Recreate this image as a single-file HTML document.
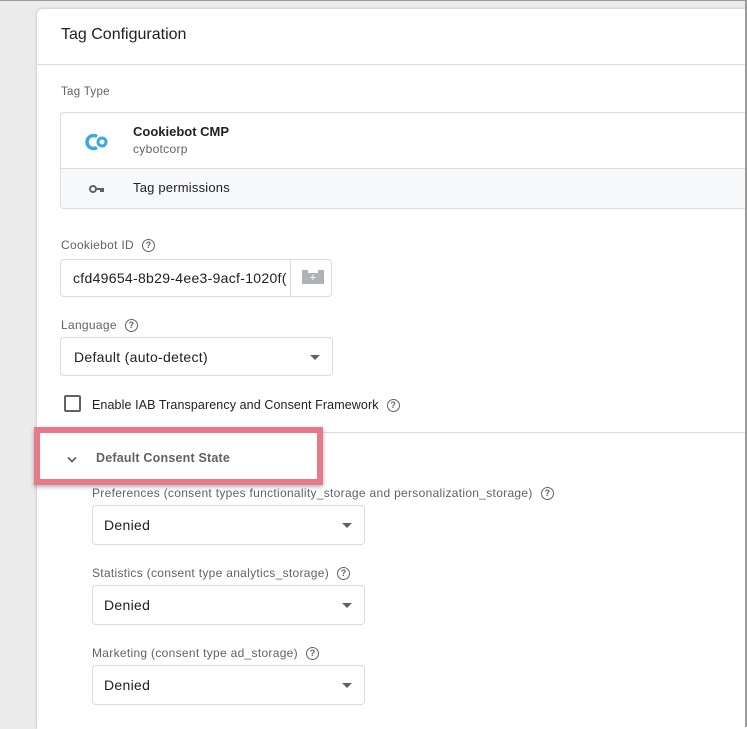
<!DOCTYPE html>
<html><head><style>
*{box-sizing:border-box;margin:0;padding:0}
body{width:747px;height:727px;overflow:hidden;background:#ebebeb;font-family:"Liberation Sans",Arial,sans-serif;position:relative;color:#202124}
.frame{position:absolute;left:0;top:0;width:747px;height:727px;border-top:1px solid #9a9a9a;border-right:2px solid #9a9a9a}
.card{position:absolute;left:37px;top:9px;width:710px;height:720px;background:#fff;border-radius:6px 0 0 0;box-shadow:0 0 3px rgba(0,0,0,.2)}
.abs{position:absolute}
.lbl{font-size:12px;color:#5f6368;letter-spacing:.3px}
.q{display:inline-block;width:13px;height:13px;border:1.3px solid #5f6368;border-radius:50%;font-size:9px;line-height:11px;text-align:center;color:#5f6368;font-weight:bold;vertical-align:middle;margin-left:8px;letter-spacing:0}
.sel{position:absolute;border:1px solid #dadce0;border-radius:4px;background:#fff;font-size:14px;padding-left:11px;line-height:38px;letter-spacing:.3px}
.sel:after{content:"";position:absolute;right:12px;top:17px;border-left:5px solid transparent;border-right:5px solid transparent;border-top:5px solid #5f6368}
</style></head><body>
<div class="card">
 <div class="abs" style="left:24px;top:17px;font-size:16px">Tag Configuration</div>
 <div class="abs" style="left:0;top:55px;width:710px;height:1px;background:#dadce0"></div>
 <div class="abs lbl" style="left:24px;top:77px;font-size:11.5px">Tag Type</div>
 <div class="abs" style="left:23px;top:103px;width:700px;height:97px;border:1px solid #dadce0;border-radius:4px;overflow:hidden">
  <div class="abs" style="left:0;top:55px;width:700px;height:42px;background:#f8f9fa;border-top:1px solid #dadce0"></div>
  <svg class="abs" style="left:23px;top:19px" width="28" height="20" viewBox="0 0 28 20"><path d="M13 4.5A6.5 6.5 0 1 0 13 15.5" fill="none" stroke="#3ba9e0" stroke-width="3.5"/><circle cx="18" cy="10" r="4" fill="none" stroke="#3ba9e0" stroke-width="3"/></svg>
  <div class="abs" style="left:72px;top:11px;font-size:13px;font-weight:bold">Cookiebot CMP</div>
  <div class="abs lbl" style="left:72px;top:29px;font-size:12px">cybotcorp</div>
  <svg class="abs" style="left:28px;top:71px" width="16" height="10"><circle cx="4" cy="5" r="3" fill="none" stroke="#5f6368" stroke-width="2"/><path d="M7 5h8M12 5v3M14 5v3" stroke="#5f6368" stroke-width="2"/></svg>
  <div class="abs" style="left:72px;top:67px;font-size:13px;letter-spacing:.2px">Tag permissions</div>
 </div>
 <div class="abs lbl" style="left:24px;top:229px">Cookiebot ID<span class="q">?</span></div>
 <div class="abs" style="left:23px;top:250px;width:272px;height:38px;border:1px solid #dadce0;border-radius:4px">
  <div class="abs" style="left:12px;top:10px;font-size:14px;letter-spacing:.3px;width:216px;overflow:hidden;white-space:nowrap">cfd49654-8b29-4ee3-9acf-1020f(</div>
  <div class="abs" style="left:229px;top:0;width:1px;height:36px;background:#dadce0"></div>
  <div class="abs" style="left:241px;top:13px;width:22px;height:11px;background:#b0b3b6;color:#fff;font-size:11px;line-height:11px;text-align:center">+</div>
  <div class="abs" style="left:241px;top:10px;width:6px;height:3px;background:#b0b3b6"></div>
  <div class="abs" style="left:257px;top:10px;width:6px;height:3px;background:#b0b3b6"></div>
 </div>
 <div class="abs lbl" style="left:24px;top:309px">Language<span class="q">?</span></div>
 <div class="sel" style="left:23px;top:328px;width:273px;height:39px;padding-left:13px">Default (auto-detect)</div>
 <div class="abs" style="left:27px;top:386px;width:17px;height:17px;border:2px solid #5f6368;border-radius:2px"></div>
 <div class="abs" style="left:55px;top:389px;font-size:12.5px;letter-spacing:.1px">Enable IAB Transparency and Consent Framework<span class="q">?</span></div>
 <div class="abs" style="left:0;top:423px;width:710px;height:1px;background:#dadce0"></div>
 <div class="abs lbl" style="left:55px;top:477px">Preferences (consent types functionality_storage and personalization_storage)<span class="q">?</span></div>
 <div class="sel" style="left:55px;top:496px;width:273px;height:40px">Denied</div>
 <div class="abs lbl" style="left:55px;top:557px">Statistics (consent type analytics_storage)<span class="q">?</span></div>
 <div class="sel" style="left:55px;top:576px;width:273px;height:40px">Denied</div>
 <div class="abs lbl" style="left:55px;top:637px">Marketing (consent type ad_storage)<span class="q">?</span></div>
 <div class="sel" style="left:55px;top:656px;width:273px;height:40px">Denied</div>
</div>
<div class="abs" style="left:34px;top:427px;width:289px;height:58px;border:6px solid #e8788a;background:#fff;box-shadow:0 2px 4px rgba(0,0,0,.3)">
 <svg class="abs" style="left:26px;top:23px" width="12" height="8"><path d="M2 1.5l4 4 4-4" fill="none" stroke="#5f6368" stroke-width="1.8"/></svg>
 <div class="abs" style="left:56px;top:18px;font-size:12.5px;font-weight:bold;color:#5f6368;letter-spacing:.2px">Default Consent State</div>
</div>
<div class="frame"></div>
</body></html>
